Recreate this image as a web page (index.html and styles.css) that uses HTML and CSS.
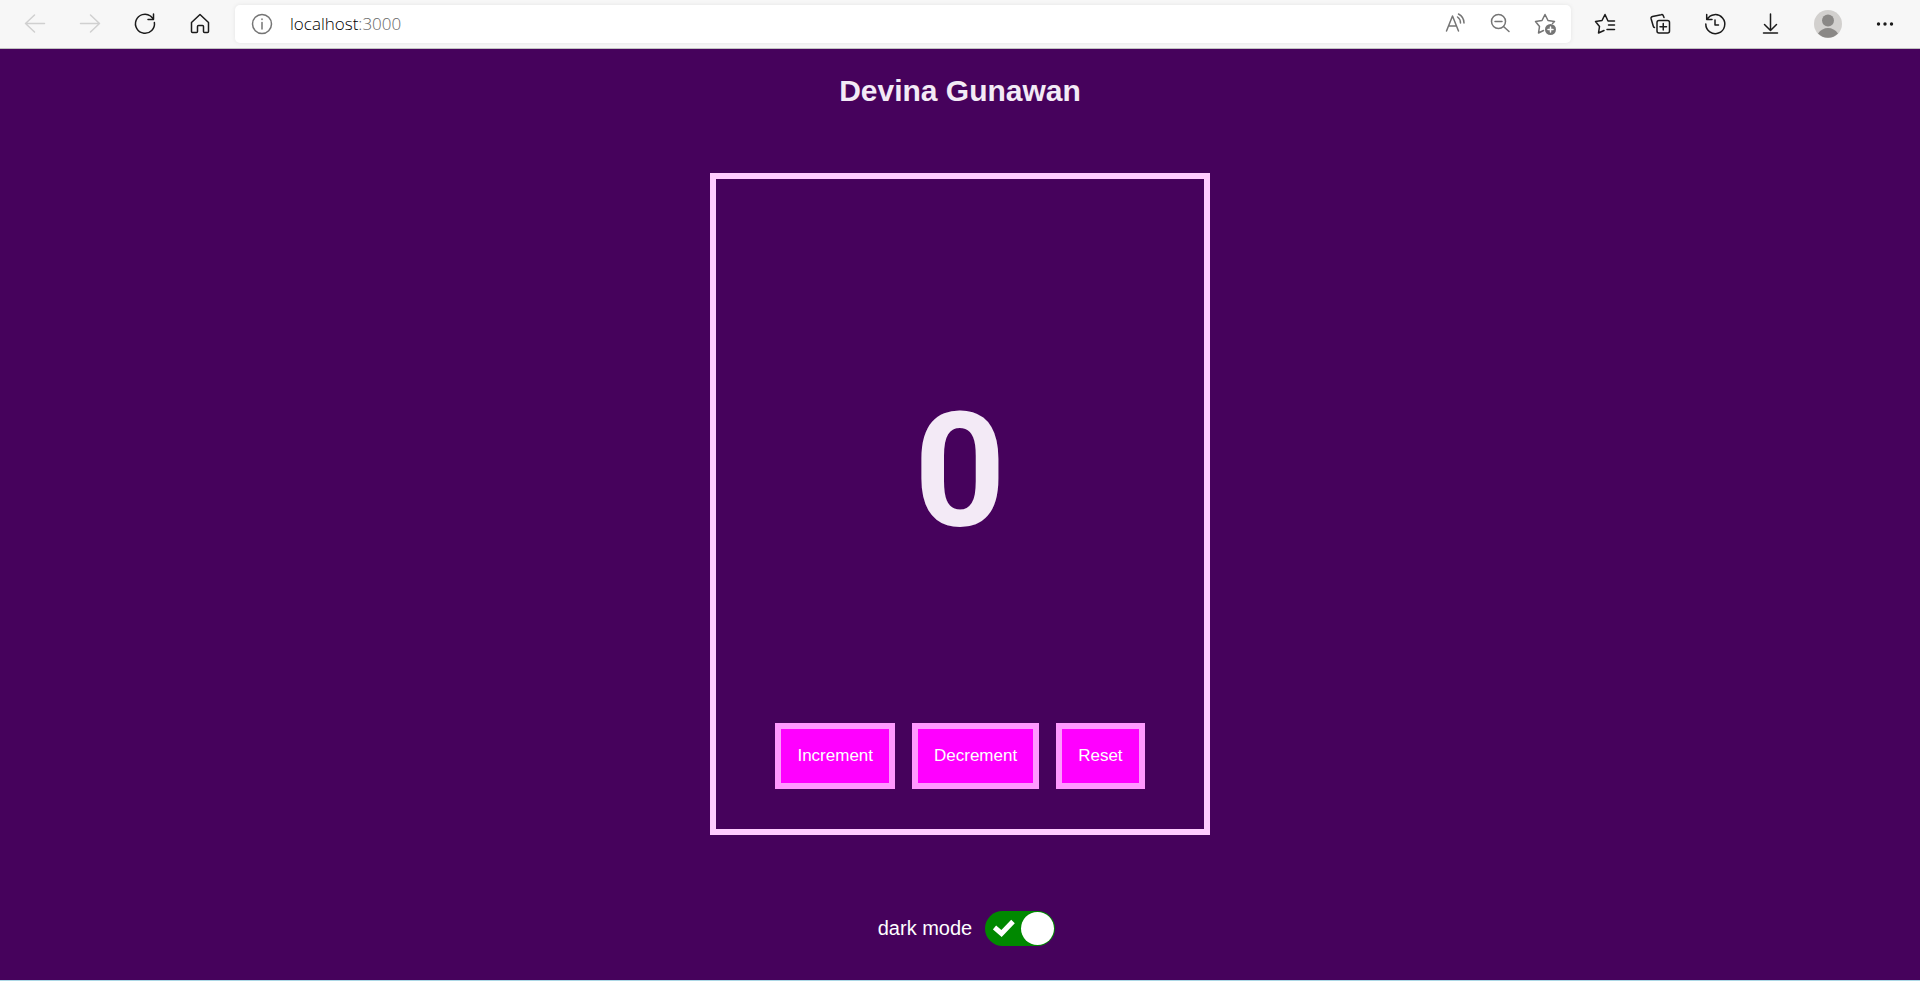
FILE: index.html
```html
<!DOCTYPE html>
<html lang="en">
<head>
<meta charset="utf-8">
<title>Counter</title>
<link rel="stylesheet" href="styles.css">
</head>
<body>
<header class="toolbar">
  <div class="nav">
    <button class="tool off" aria-label="Back" disabled><svg viewBox="0 0 24 24"><path d="M21.500 11.500H2.500M11.500 3l-9 8.500 9 8.500"/></svg></button>
    <button class="tool off" aria-label="Forward" disabled><svg viewBox="0 0 24 24"><path d="M2.500 11.500h19M12.500 3l9 8.500-9 8.500"/></svg></button>
    <button class="tool" aria-label="Refresh"><svg viewBox="0 0 24 24"><path d="M21.400 10.500A9.500 9.500 0 1 1 17.500 4L20.500 7M20.500 2V7.500H15"/></svg></button>
    <button class="tool" aria-label="Home"><svg viewBox="0 0 24 24"><path d="M12 2.500l8.500 8V19.500q0 1-1 1h-3q-1 0-1-1v-5q0-1-1-1h-4q-1 0-1 1v5q0 1-1 1H4.500q-1 0-1-1v-9z"/></svg></button>
  </div>
  <div class="address">
    <button class="tool soft" aria-label="Site information"><svg viewBox="0 0 24 24"><circle cx="12" cy="12" r="9.500"/><path d="M12 10.500V17M12 7v.5"/></svg></button>
    <div class="url">localhost<span class="port">:3000</span></div>
    <button class="tool soft" aria-label="Read aloud"><svg viewBox="0 0 24 24"><path d="M3.500 19L9.500 4l6 15M5.500 14h8M14.500 5q3 2 3 6M15.500 2q5.500 3 5.500 9"/></svg></button>
    <button class="tool soft" aria-label="Zoom out"><svg viewBox="0 0 24 24"><circle cx="10.500" cy="9.500" r="7"/><path d="M15.500 14.500l5.500 5M7 9.500h7"/></svg></button>
    <button class="tool soft" aria-label="Add to favorites"><svg viewBox="0 0 24 24"><path d="M10.500 18.500L5.500 21l1-6.500L2.500 9.500 9 8.500l3-6 3 6 6.500 1-2 2"/><circle class="solid" cx="17.500" cy="17.500" r="5.500"/><path class="plus" d="M17.500 15v5M15 17.500h5"/></svg></button>
  </div>
  <div class="actions">
    <button class="tool" aria-label="Favorites"><svg viewBox="0 0 24 24"><path d="M10 18.500L4.500 21l1-6.500L1.500 9.500 8 8.500l3-6 3 6.500h6.500M14.500 13h6M13 17.500h7.500"/></svg></button>
    <button class="tool" aria-label="Collections"><svg viewBox="0 0 24 24"><rect x="8" y="8.500" width="12.500" height="12.500" rx="2"/><path d="M14.250 11.500v6.500M11 14.750h6.500M15 5.500l-.8-2q-.6-1.200-2-.8L3.500 4.500q-1.800.6-1.400 2.200l2.200 7.500q.3 1 1.200 1.200"/></svg></button>
    <button class="tool" aria-label="History"><svg viewBox="0 0 24 24"><path d="M3 7.500A9.500 9.500 0 1 1 1.800 12M2.700 2.500v5h5.300M11 8v5H14.500"/></svg></button>
    <button class="tool" aria-label="Downloads"><svg viewBox="0 0 24 24"><path d="M11.500 2v16M5.500 12.500l6 6 6-6M4.500 21h14"/></svg></button>
    <button class="tool avatar" aria-label="Profile"><svg viewBox="0 0 28 28"><circle class="disc" cx="14" cy="14" r="14"/><circle class="person" cx="14" cy="10.500" r="6"/><path class="person" d="M4 23.500q4-5.500 10-5.500t10 5.500a14 14 0 0 1-20 0z"/></svg></button>
    <button class="tool" aria-label="Settings and more"><svg viewBox="0 0 24 24"><g class="dots"><circle cx="5.500" cy="12" r="1.700"/><circle cx="12" cy="12" r="1.700"/><circle cx="18.500" cy="12" r="1.700"/></g></svg></button>
  </div>
</header>
<main class="app">
  <h1 class="title">Devina Gunawan</h1>
  <section class="card">
    <output class="count">0</output>
    <div class="controls">
      <button class="action">Increment</button>
      <button class="action">Decrement</button>
      <button class="action">Reset</button>
    </div>
  </section>
  <label class="mode">dark mode
    <span class="switch">
      <input type="checkbox" class="toggle" role="switch" checked>
      <svg class="check" viewBox="0 0 22 18"><path d="M1.500 8.500l7 6L20 2.500"/></svg>
    </span>
  </label>
</main>
</body>
</html>
```
FILE: styles.css
```css
* { box-sizing: border-box; }
body {
  margin: 0;
  min-height: 100vh;
  display: flex;
  flex-direction: column;
  font-family: "Liberation Sans", Arial, sans-serif;
  background: #46025c;
}
button { font: inherit; }
.toolbar {
  display: flex;
  align-items: center;
  height: 49px;
  background: #f7f7f7;
  border-bottom: 1px solid #c0c0c0;
}
.nav { display: flex; gap: 31px; padding: 0 23px; }
.tool {
  flex: none;
  width: 24px;
  height: 24px;
  padding: 0;
  border: 0;
  background: none;
  color: #1b1b1b;
}
.tool svg {
  display: block;
  width: 100%;
  height: 100%;
  fill: none;
  stroke: currentColor;
  stroke-width: 1.5;
  stroke-linecap: round;
  stroke-linejoin: round;
}
.off { color: #d0d0d0; }
.soft { color: #757575; }
.address {
  flex: 1;
  display: flex;
  align-items: center;
  gap: 21px;
  height: 38px;
  padding: 0 14px 0 15px;
  border-radius: 5px;
  background: #fff;
  box-shadow: 0 0 4px #e4e4e4;
}
.url {
  flex: 1;
  margin-left: -5px;
  font: 300 17px/24px "Open Sans", "Noto Sans", sans-serif;
  color: #000;
}
.port { color: #666; }
.soft .solid { fill: #757575; stroke: none; }
.soft .plus { stroke: #fff; }
.actions { display: flex; align-items: center; gap: 31px; padding: 0 23px; }
.avatar { width: 28px; height: 28px; }
.avatar svg { stroke: none; }
.disc { fill: #d2d0ce; }
.person { fill: #8a8886; }
.dots { fill: currentColor; stroke: none; }
.app {
  flex: 1;
  display: flex;
  flex-direction: column;
  align-items: center;
  padding: 25px 16px 32px;
  border-bottom: 1px solid #add8e6;
  color: #f3eaf6;
}
.title { margin: 0 0 65px; font-size: 30px; line-height: 34px; }
.card {
  display: flex;
  flex-direction: column;
  align-items: center;
  width: 100%;
  max-width: 500px;
  padding: 212px 16px 40px;
  border: 6px solid #ffccff;
}
.count {
  font-family: Roboto, "Open Sans", sans-serif;
  font-size: 160px;
  font-weight: 700;
  line-height: 160px;
}
.controls { display: flex; gap: 17px; margin-top: 172px; }
.action {
  padding: 16px;
  border: 6px solid #ff99ff;
  background: #ff00ff;
  color: #fff;
  font-size: 17px;
  line-height: 22px;
}
.mode {
  display: flex;
  align-items: center;
  gap: 13px;
  margin: 76px 0 0 13px;
  font-size: 20px;
  color: #fff;
}
.switch { position: relative; display: flex; }
.toggle {
  appearance: none;
  display: flex;
  align-items: center;
  width: 70px;
  height: 35px;
  margin: 0;
  padding: 1px;
  border-radius: 18px;
  background: #808080;
}
.toggle:checked { justify-content: flex-end; background: #008800; }
.toggle::before {
  content: "";
  width: 33px;
  height: 33px;
  border-radius: 50%;
  background: #fff;
}
.check {
  position: absolute;
  left: 8px;
  top: 8px;
  width: 22px;
  height: 18px;
  fill: none;
  stroke: #fff;
  stroke-width: 5;
}
```
